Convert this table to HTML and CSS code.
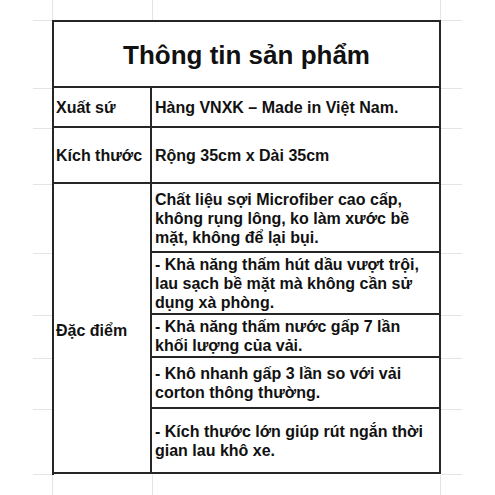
FILE: index.html
```html
<!DOCTYPE html>
<html lang="vi">
<head>
<meta charset="utf-8">
<title>Thông tin sản phẩm</title>
<link rel="stylesheet" href="styles.css">
</head>
<body>
<div class="sheet">
  <div class="top top-b"></div>
  <div class="top top-c"></div>

  <div class="stub stub-l r1"></div><div class="stub stub-r r1"></div>
  <div class="stub stub-l r2"></div><div class="stub stub-r r2"></div>
  <div class="stub stub-l r3"></div><div class="stub stub-r r3"></div>
  <div class="stub stub-l r4"></div><div class="stub stub-r r4"></div>
  <div class="stub stub-l r5"></div><div class="stub stub-r r5"></div>
  <div class="stub stub-l r6"></div><div class="stub stub-r r6"></div>
  <div class="stub stub-l r7"></div><div class="stub stub-r r7"></div>
  <div class="stub stub-l r8"></div><div class="stub stub-r r8"></div>
  <div class="stub stub-l r9"></div><div class="stub stub-r r9"></div>

  <div class="table">
    <div class="cell title">Thông tin sản phẩm</div>
    <div class="cell label">Xuất sứ</div>
    <div class="cell value">Hàng VNXK – Made in Việt Nam.</div>
    <div class="cell label">Kích thước</div>
    <div class="cell value">Rộng 35cm x Dài 35cm</div>
    <div class="cell label merged">Đặc điểm</div>
    <div class="cell item">Chất liệu sợi Microfiber cao cấp, không rụng lông, ko làm xước bề mặt, không để lại bụi.</div>
    <div class="cell item">- Khả năng thấm hút dầu vượt trội, lau sạch bề mặt mà không cần sử dụng xà phòng.</div>
    <div class="cell item">- Khả năng thấm nước gấp 7 lần khối lượng của vải.</div>
    <div class="cell item">- Khô nhanh gấp 3 lần so với vải corton thông thường.</div>
    <div class="cell item">- Kích thước lớn giúp rút ngắn thời gian lau khô xe.</div>
  </div>

  <div class="bottom bottom-b"></div>
  <div class="bottom bottom-c"></div>
</div>
</body>
</html>
```

FILE: styles.css
```css
* { box-sizing: border-box; }

html, body {
  margin: 0;
  padding: 0;
  background: #ffffff;
}

body {
  font-family: "Liberation Sans", Arial, sans-serif;
  font-weight: bold;
  color: #111111;
}

.sheet {
  display: grid;
  margin-left: 33px;
  width: 429px;
  grid-template-columns: 19px 100px 289px 21px;
  grid-template-rows: 21px 68px 40px 56px 69px 62px 43px 51px 65px 20px;
}

/* light spreadsheet gridlines outside the table */
.top, .bottom {
  border-left: 1px solid #e4e4e4;
}
.top-b { grid-column: 2; grid-row: 1; }
.top-c { grid-column: 3; grid-row: 1; border-right: 1px solid #e4e4e4; }
.bottom-b { grid-column: 2; grid-row: 10; }
.bottom-c { grid-column: 3; grid-row: 10; border-right: 1px solid #e4e4e4; }

.stub { border-bottom: 1px solid #e4e4e4; }
.stub-l { grid-column: 1; }
.stub-r { grid-column: 4; }
.r1 { grid-row: 1; }
.r2 { grid-row: 2; }
.r3 { grid-row: 3; }
.r4 { grid-row: 4; }
.r5 { grid-row: 5; }
.r6 { grid-row: 6; }
.r7 { grid-row: 7; }
.r8 { grid-row: 8; }
.r9 { grid-row: 9; }

/* the bordered product table */
.table {
  grid-column: 2 / 4;
  grid-row: 2 / 10;
  display: grid;
  grid-template-columns: 98px 289px;
  grid-template-rows: 68px 40px 56px 69px 62px 43px 51px 65px;
  border-left: 2px solid #262626;
  margin-top: -1px;
}

.cell {
  display: flex;
  align-items: center;
  border-right: 2px solid #262626;
  border-bottom: 2px solid #262626;
  padding-left: 3px;
}

.title {
  grid-column: 1 / 3;
  justify-content: center;
  padding-left: 0;
  font-size: 26px;
  border-top: 2px solid #262626;
  padding-top: 2px;
}

.label {
  font-size: 16px;
  padding-left: 2px;
  padding-top: 1px;
}

.value {
  font-size: 16px;
  padding-top: 1px;
}

.merged {
  grid-row: 4 / 9;
  padding-top: 6px;
}

.item {
  font-size: 16px;
  line-height: 19px;
  padding-right: 4px;
  padding-top: 1px;
}
```
